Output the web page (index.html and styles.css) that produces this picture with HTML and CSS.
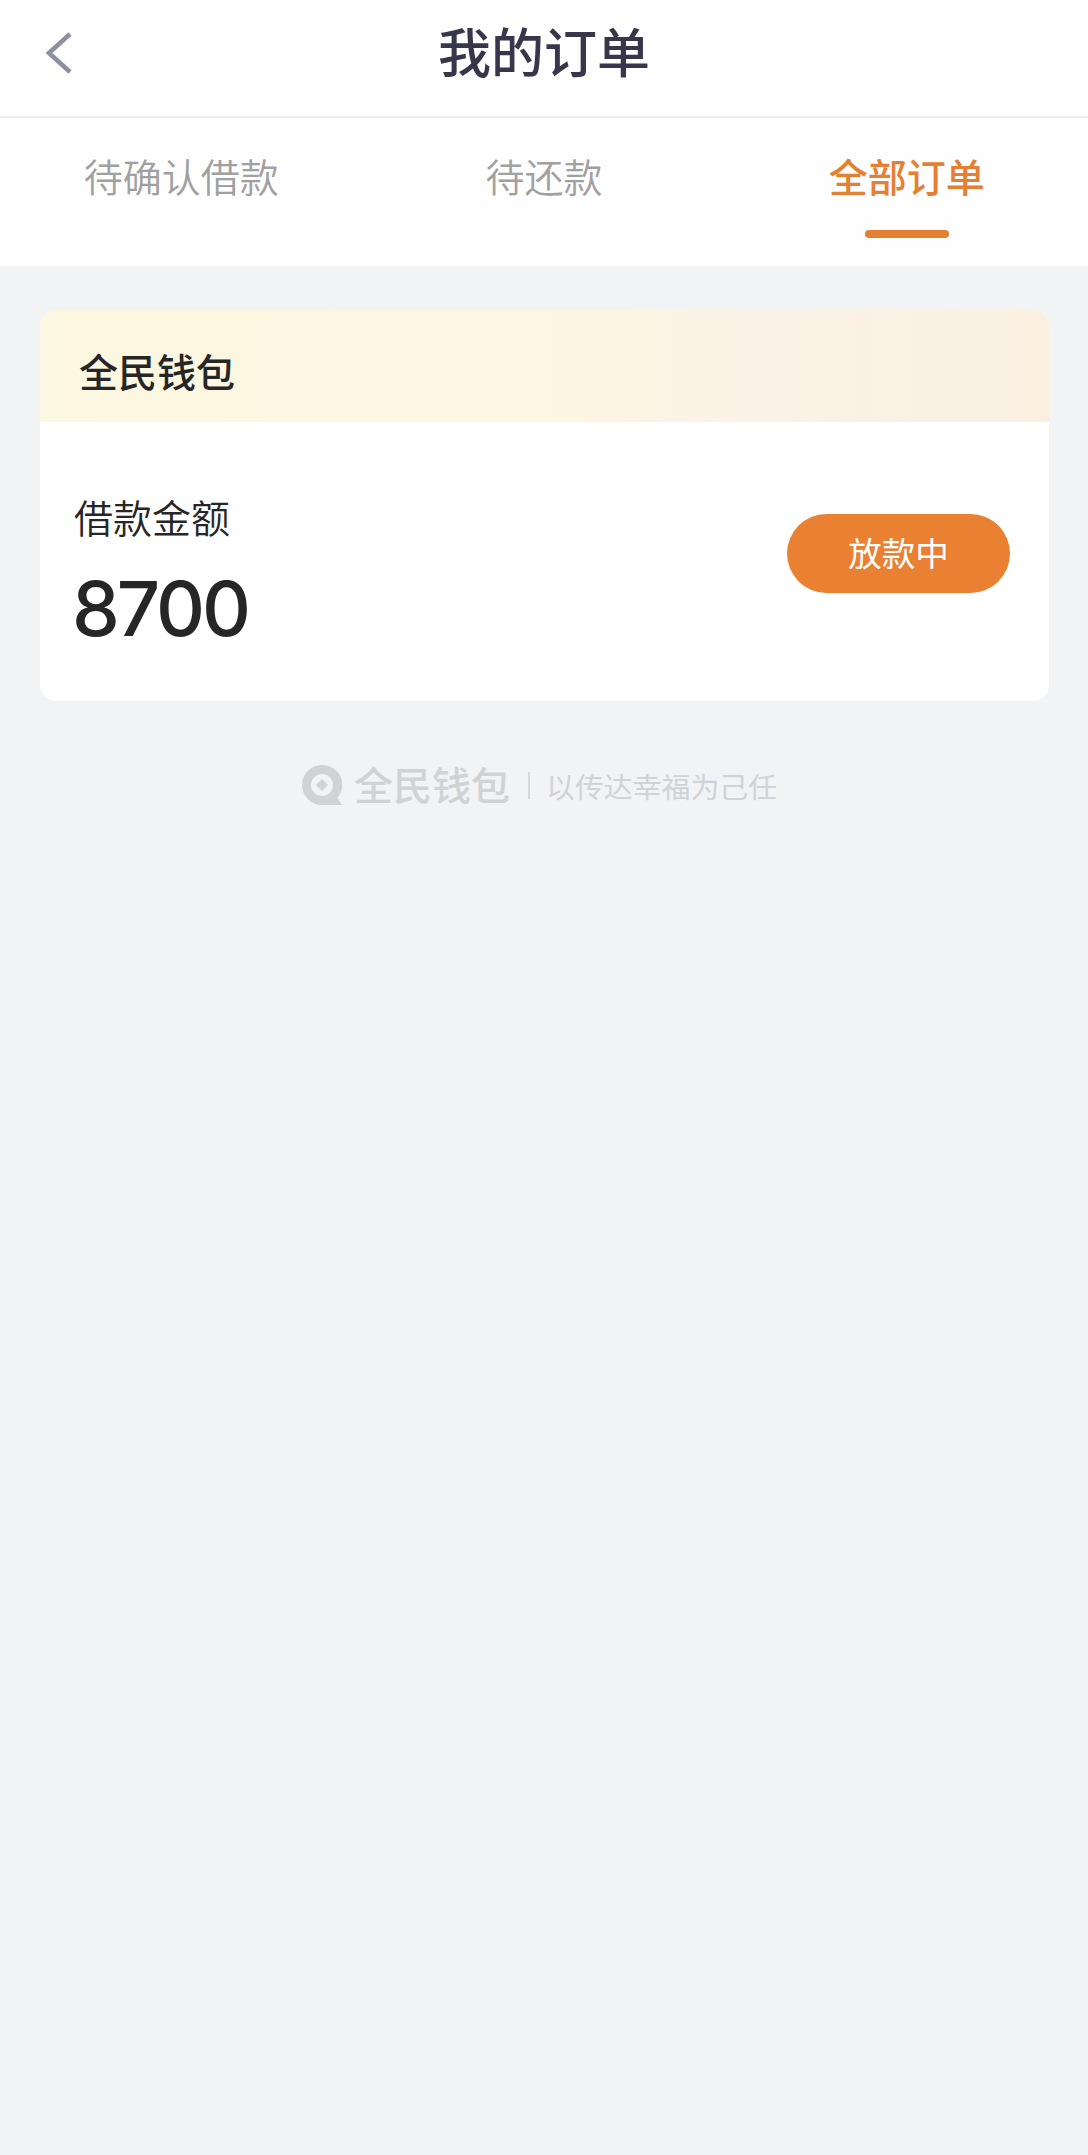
FILE: index.html
```
<!DOCTYPE html>
<html lang="zh-CN">
<head>
    <meta charset="UTF-8">
    <meta name="viewport" content="width=device-width, initial-scale=1.0">
    <title>我的订单</title>
    <link rel="stylesheet" href="styles.css">
</head>
<body>
    <header class="navbar">
        <a class="back" href="#" aria-label="返回">
            <svg width="28" height="42" viewBox="0 0 28 42" fill="none" stroke="#8f8fa3" stroke-width="4.6">
                <path d="M25 2 L4 21 L25 40"/>
            </svg>
        </a>
        <h1>我的订单</h1>
    </header>

    <nav class="tabs">
        <a class="tab" href="#">待确认借款</a>
        <a class="tab" href="#">待还款</a>
        <a class="tab active" href="#">全部订单</a>
    </nav>

    <main>
        <div class="order">
            <div class="order-header">全民钱包</div>
            <div class="order-body">
                <div class="info">
                    <p class="label">借款金额</p>
                    <p class="amount">8700</p>
                </div>
                <button class="status">放款中</button>
            </div>
        </div>
    </main>

    <footer class="footer">
        <svg class="logo" width="41" height="41" viewBox="0 0 41 41">
            <path fill="#d0d2d5" fill-rule="evenodd" d="M20 0 A20 20 0 1 0 20 40 H40 L35.500 33 A20 20 0 0 0 20 0 Z M20 9 A11 11 0 1 1 20 31 A11 11 0 1 1 20 9 Z"/>
            <path fill="#d0d2d5" d="M20 14 L26 20 L20 26 L14 20 Z"/>
        </svg>
        <span class="brand">全民钱包</span>
        <span class="divider"></span>
        <span class="slogan">以传达幸福为己任</span>
    </footer>
</body>
</html>
```
FILE: styles.css
```
* {
    box-sizing: border-box;
}
body {
    font-family: "Noto Sans CJK SC", sans-serif;
    margin: 0;
    min-height: 2155px;
    background-color: #f2f3f5;
    color: #262626;
}
a {
    text-decoration: none;
}
p {
    margin: 0;
}
.navbar {
    display: grid;
    grid-template-columns: 120px 1fr 120px;
    align-items: center;
    height: 118px;
    padding-bottom: 11px;
    background-color: #fefefe;
    border-bottom: 2px solid #ededee;
}
.back {
    display: flex;
    padding-left: 45px;
}
.navbar h1 {
    margin: 0;
    padding-bottom: 5px;
    text-align: center;
    font-size: 53px;
    line-height: 60px;
    font-weight: 500;
    color: #37364a;
}
.tabs {
    display: grid;
    grid-template-columns: repeat(3, 1fr);
    height: 148px;
    padding-top: 27px;
    background-color: #fefefe;
}
.tab {
    text-align: center;
    font-size: 39px;
    line-height: 60px;
    font-weight: 350;
    color: #a0a0a0;
}
.tab.active {
    font-weight: 500;
    color: #e57f32;
}
.tab.active::after {
    content: "";
    display: block;
    width: 84px;
    height: 8px;
    margin: 25px auto 0;
    border-radius: 4px;
    background-color: #e57f32;
}
main {
    padding: 44px 39px 0 40px;
}
.order {
    border-radius: 16px;
    background-color: #fff;
    overflow: hidden;
}
.order-header {
    height: 112px;
    padding: 0 39px;
    font-size: 39px;
    line-height: 120px;
    font-weight: 500;
    background: linear-gradient(90deg, #fbf8e1, #fcf5e3 58%, #faf2e7 72%, #fbf0e0);
}
.order-body {
    display: flex;
    justify-content: space-between;
    align-items: flex-start;
    height: 279px;
    padding: 64px 39px 0 34px;
}
.label {
    font-size: 39px;
    line-height: 60px;
    font-weight: 350;
}
.amount {
    font-family: Inter, sans-serif;
    font-size: 76px;
    line-height: 90px;
    font-weight: 500;
    letter-spacing: -3px;
    margin: 17px 0 0 -2px;
}
.status {
    width: 223px;
    height: 79px;
    margin-top: 28px;
    padding: 0 0 4px;
    border: none;
    border-radius: 40px;
    font-family: inherit;
    font-size: 33.500px;
    font-weight: 400;
    color: #fff;
    background-color: #ea8031;
    cursor: pointer;
}
.footer {
    display: flex;
    align-items: center;
    height: 42px;
    margin-top: 63px;
    padding-left: 302px;
    color: #d0d2d5;
}
.brand {
    margin-left: 11px;
    padding-bottom: 5px;
    font-size: 39px;
    line-height: 42px;
    font-weight: 500;
}
.divider {
    width: 2px;
    height: 27px;
    margin: 0 16px 0 18px;
    background-color: #d6d8da;
}
.slogan {
    font-size: 28.900px;
    line-height: 42px;
}
```
